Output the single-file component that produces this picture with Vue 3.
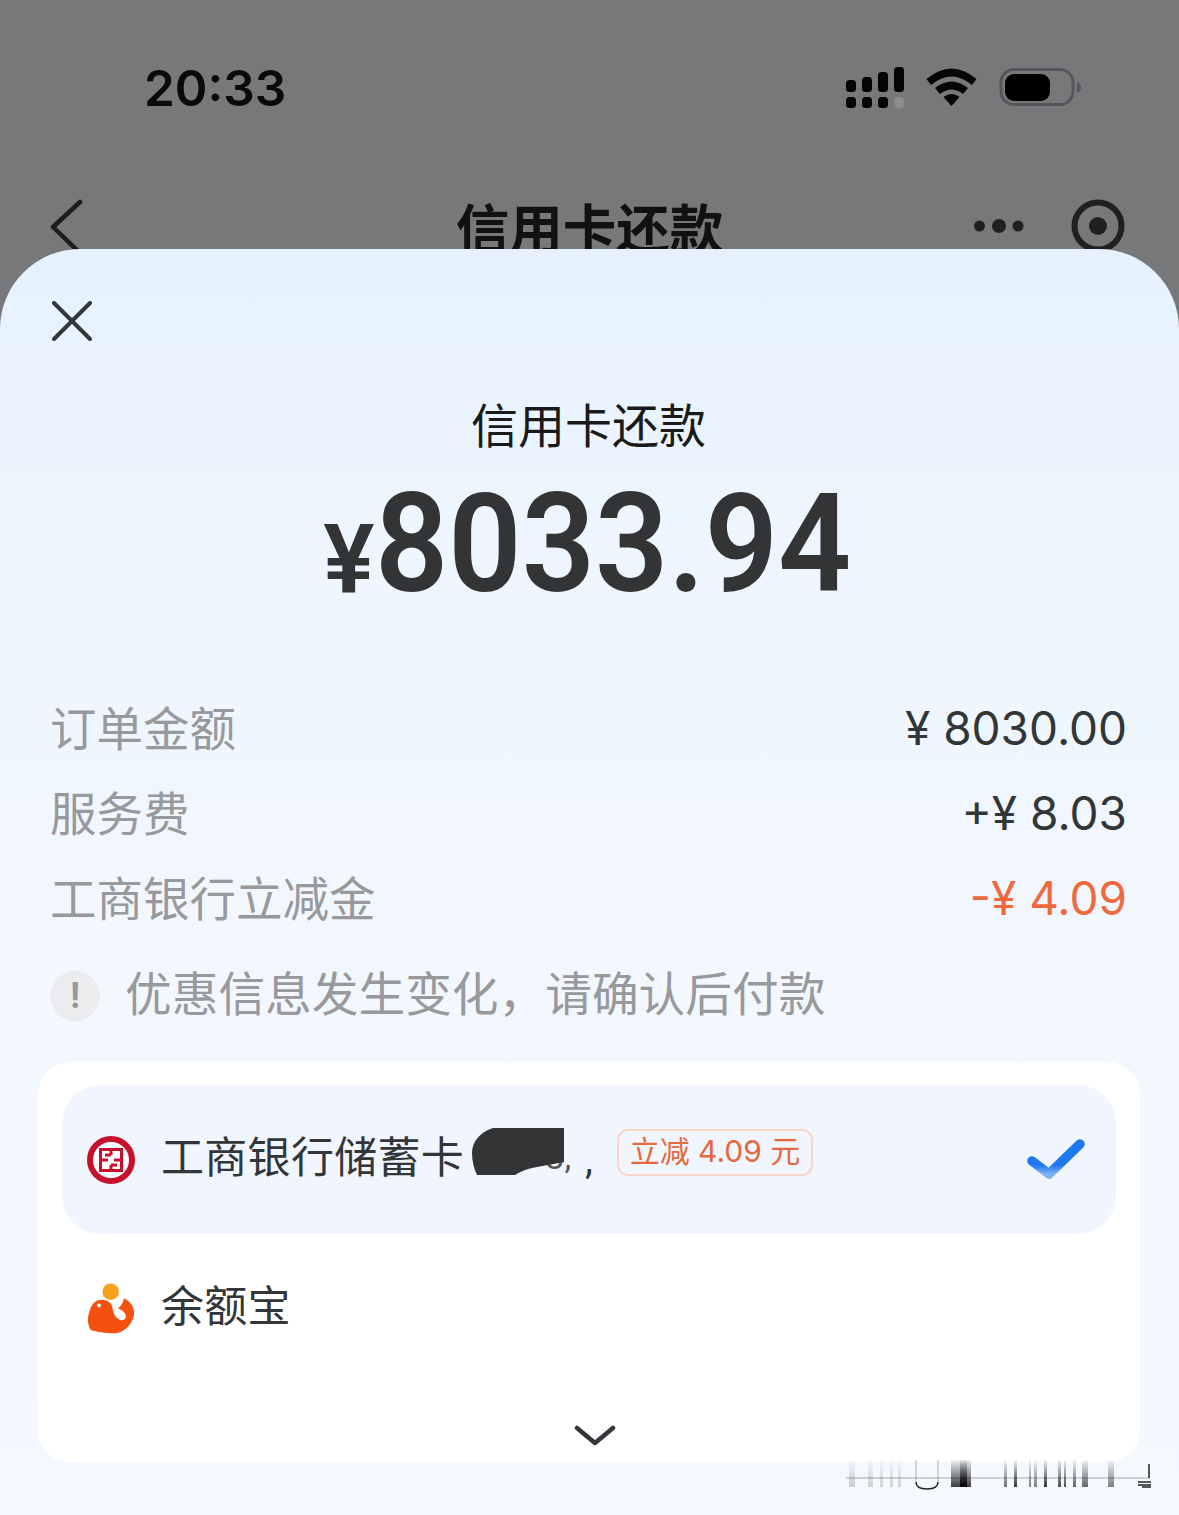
<script setup>
const fees = [
  { label: '订单金额', value: '¥ 8030.00' },
  { label: '服务费', value: '+¥ 8.03' },
  { label: '工商银行立减金', value: '-¥ 4.09', accent: true },
]
const signal = [
  { x: 846, y: 80, h: 12 },
  { x: 862, y: 77, h: 15 },
  { x: 878, y: 72, h: 20 },
  { x: 894, y: 67, h: 25 },
]
const bars = [
  [3, 6, 0.18], [22, 5, 0.16], [34, 3, 0.16], [44, 3, 0.16], [52, 3, 0.16],
  [105, 20, 0.75], [114, 7, 0.9], [158, 3, 0.55], [168, 3, 0.8], [183, 2, 0.5], [188, 3, 0.5],
  [198, 3, 0.8], [212, 3, 0.7], [218, 2, 0.7], [227, 3, 0.6], [236, 6, 0.6], [262, 6, 0.5],
]
</script>

<template>
  <div class="page">
    <header class="top">
      <div class="status">
        <span class="time">20:33</span>
        <svg class="status-icons" viewBox="840 60 245 55" width="245" height="55">
          <g v-for="b in signal" :key="b.x">
            <rect :x="b.x" :y="b.y" width="10" :height="b.h" rx="3.500" fill="#050505" />
            <rect :x="b.x" y="97" width="10" height="11" rx="3.500" :fill="b.x === 894 ? '#8c8c8e' : '#050505'" />
          </g>
          <path d="M926.5 79 Q951.5 58 976.5 79 L972 85 Q951.5 68 931 85 Z" fill="#050505" />
          <path d="M935 88 Q951.5 75 968 88 L963 94 Q951.5 85 940 94 Z" fill="#050505" />
          <path d="M943.5 97 Q951.5 91 959.5 97 L951.5 106 Z" fill="#050505" />
          <rect x="1001" y="69.500" width="72" height="35" rx="13" fill="none" stroke="#55565a" stroke-width="3" />
          <rect x="1005" y="74" width="45" height="27" rx="9" fill="#000" />
          <path d="M1077 82 Q1081 84 1081 87.500 Q1081 91 1077 93 Z" fill="#55565a" />
        </svg>
      </div>
      <nav class="nav">
        <svg width="36" height="62" viewBox="0 0 36 62">
          <path d="M31 7 L4 32 L31 58" fill="none" stroke="#1c1c1e" stroke-width="4.500" stroke-linecap="round" stroke-linejoin="round" />
        </svg>
        <h1 class="nav-title">信用卡还款</h1>
        <svg class="nav-tools" width="152" height="54" viewBox="0 0 152 54">
          <circle cx="6.500" cy="27" r="5.500" fill="#202022" />
          <circle cx="26" cy="27" r="7" fill="#202022" />
          <circle cx="45" cy="27" r="5.500" fill="#202022" />
          <circle cx="125" cy="27" r="23.500" fill="none" stroke="#202022" stroke-width="6" />
          <circle cx="125" cy="27" r="9" fill="#202022" />
        </svg>
      </nav>
    </header>

    <main class="sheet">
      <svg class="close" width="40" height="40" viewBox="0 0 40 40">
        <path d="M2 2 L38 38 M38 2 L2 38" stroke="#33363b" stroke-width="4" stroke-linecap="round" />
      </svg>
      <h2 class="sheet-title">信用卡还款</h2>
      <div class="amount">
        <span class="yen">¥</span>
        <span class="digits">8033.94</span>
      </div>

      <section class="fees">
        <div v-for="f in fees" :key="f.label" class="fee">
          <span class="fee-label">{{ f.label }}</span>
          <span class="fee-value" :class="{ accent: f.accent }">{{ f.value }}</span>
        </div>
      </section>

      <div class="notice">
        <span class="notice-icon">!</span>
        <span class="notice-text">优惠信息发生变化，请确认后付款</span>
      </div>

      <section class="card">
        <div class="method selected">
          <svg class="logo" width="48" height="48" viewBox="0 0 48 48">
            <circle cx="24" cy="24" r="21" fill="#fff" stroke="#c7102c" stroke-width="6" />
            <path d="M12 13.500H36 M12 34.500H36 M13.500 13.500V24H21 M34.500 13.500V24H27 M13.500 24V34.500 M34.500 24V34.500 M24 13.500V19 M24 29V34.500 M18 19H24 M24 29H30" fill="none" stroke="#c7102c" stroke-width="3" />
          </svg>
          <span class="method-name">工商银行储蓄卡</span>
          <span class="card-no">
            <span class="card-tail">3,</span>
            <svg class="blob" width="92" height="47" viewBox="0 0 92 47">
              <path d="M92 0H21C8 4 0 14 0 25C0 33 2 41 5 47H43C48 44 52 42 60 40C70 38 82 36 92 34Z" fill="#333436" />
            </svg>
          </span>
          <span class="comma">,</span>
          <span class="tag">立减 4.09 元</span>
          <svg class="check" width="58" height="42" viewBox="0 0 58 42">
            <defs>
              <linearGradient id="checkfade" x1="0" x2="0" y1="0" y2="1">
                <stop offset="0.700" stop-color="#1f78ef" />
                <stop offset="1" stop-color="#7db2f5" />
              </linearGradient>
            </defs>
            <path d="M5 22 L22 35 L53 5" fill="none" stroke="url(#checkfade)" stroke-width="9.500" stroke-linecap="round" stroke-linejoin="round" />
          </svg>
        </div>
        <div class="method">
          <svg class="logo" width="48" height="54" viewBox="0 0 48 54">
            <circle cx="23.700" cy="8.700" r="8.300" fill="#f6a11c" />
            <path d="M3.700 47C1 42 0 36 2 30C4 22 8 17 13 17C19 16 24 19 25.300 24C26 29 28 35 33 37C37 38 40 35 38.700 32C37 28 33 26 30.300 25.300C34 24 36 20 37 15.300C43 18 48 25 47 31C46 40 38 50 27 50.300C20 50.500 10 49 3.700 47Z" fill="#f4500e" />
            <circle cx="12" cy="22.500" r="2" fill="#fff" />
          </svg>
          <span class="method-name">余额宝</span>
        </div>
        <svg class="more" width="42" height="22" viewBox="0 0 42 22">
          <path d="M3 3 L21 18 L39 3" fill="none" stroke="#33363b" stroke-width="4.500" stroke-linecap="round" stroke-linejoin="round" />
        </svg>
      </section>
    </main>

    <svg class="watermark" width="310" height="40" viewBox="0 0 310 40">
      <defs>
        <linearGradient id="fadebar" x1="0" x2="0" y1="0" y2="1">
          <stop offset="0" stop-color="#000" stop-opacity="0.05" />
          <stop offset="1" stop-color="#000" stop-opacity="1" />
        </linearGradient>
      </defs>
      <rect v-for="b in bars" :key="b[0]" :x="b[0]" y="4" :width="b[1]" height="27" fill="url(#fadebar)" :opacity="b[2]" />
      <path d="M0 22H304" stroke="#000" stroke-opacity="0.16" stroke-width="2" />
      <path d="M70 26Q70 33 81 33Q92 33 92 26" fill="none" stroke="#222" stroke-width="1.500" />
      <path d="M70 4V26M92 4V26" stroke="#000" stroke-opacity="0.25" stroke-width="1.200" />
      <path d="M303 8V22M292 26H305M292 29H305M296 31H305" stroke="#222" stroke-width="1.500" />
    </svg>
  </div>
</template>

<style>
html, body { margin: 0; background: #77787a; }
</style>

<style scoped>
.page {
  position: relative;
  width: 1179px;
  height: 1515px;
  overflow: hidden;
  background: #77787a;
  font-family: "Noto Sans CJK SC", "Noto Sans", sans-serif;
}
.top { height: 249px; overflow: hidden; }
.status { height: 175px; position: relative; }
.time {
  position: absolute;
  left: 144px;
  top: 58px;
  font: 600 49.500px/60px Inter, sans-serif;
  color: #0a0a0a;
}
.status-icons { position: absolute; left: 840px; top: 60px; }
.nav {
  height: 102px;
  position: relative;
  display: flex;
  align-items: center;
  justify-content: space-between;
  padding: 0 52px 0 49px;
}
.nav-title {
  margin: 0;
  position: absolute;
  left: 0;
  right: 0;
  text-align: center;
  font-size: 53.500px;
  line-height: 102px;
  font-weight: 700;
  color: #111;
}
.nav-tools { margin-right: 2px; }
.sheet {
  height: 1266px;
  padding-top: 52px;
  box-sizing: border-box;
  border-radius: 80px 80px 0 0;
  background: linear-gradient(180deg, #e5f2fe 0%, #edf5fe 20%, #f2f7fe 50%, #f5f8fe 100%);
  display: flex;
  flex-direction: column;
}
.close { margin-left: 52px; flex: none; }
.sheet-title {
  margin: 52px 0 4px;
  padding-right: 2px;
  text-align: center;
  font-size: 47px;
  line-height: 60px;
  font-weight: 400;
  color: #1a1a1a;
}
.amount {
  height: 170px;
  padding-right: 3px;
  display: flex;
  justify-content: center;
  align-items: baseline;
  color: #333436;
  font-family: Roboto, sans-serif;
  font-weight: 600;
  line-height: 174px;
}
.yen { font-size: 96px; margin-right: 1px; transform: translateY(2px); }
.digits {
  display: inline-block;
  font-size: 138px;
  transform: scaleX(0.93);
  transform-origin: left center;
  margin-right: -35px;
}
.fees { margin-top: 60px; padding: 0 52px 0 50px; }
.fee {
  height: 85px;
  display: flex;
  justify-content: space-between;
  align-items: center;
  font-size: 46.500px;
}
.fee-label { color: #97999c; margin-bottom: 8px; }
.fee-value {
  font-family: Inter, sans-serif;
  font-size: 46px;
  color: #333639;
  margin-bottom: 3px;
}
.fee-value.accent { color: #ee6a3e; }
.notice {
  margin: 29px 0 0 50px;
  height: 50px;
  display: flex;
  align-items: center;
  gap: 25px;
}
.notice-icon {
  width: 50px;
  height: 50px;
  border-radius: 50%;
  background: #ececee;
  color: #98999c;
  font: 700 36px/50px Roboto, sans-serif;
  text-align: center;
}
.notice-text { font-size: 46.700px; color: #97999c; white-space: nowrap; margin-bottom: 12px; }
.card {
  margin: 41px 39px 0 38px;
  height: 400px;
  box-sizing: border-box;
  padding: 23px 24px 0;
  border-radius: 32px;
  background: #fff;
  display: flex;
  flex-direction: column;
  position: relative;
}
.method {
  height: 149px;
  padding: 0 32px 0 25px;
  display: flex;
  align-items: center;
  border-radius: 38px;
  flex: none;
}
.method.selected { background: #f1f6fe; }
.logo { flex: none; margin-right: 26px; }
.method-name {
  font-size: 43px;
  letter-spacing: 0.300px;
  color: #333639;
  white-space: nowrap;
  margin-bottom: 12px;
}
.card-no {
  position: relative;
  width: 110px;
  height: 50px;
  margin-left: 7px;
  flex: none;
  font: 34px/56px Roboto, sans-serif;
  color: #55575a;
}
.card-tail { position: absolute; right: 10px; top: -6px; }
.blob { position: absolute; left: 1px; top: -7px; }
.comma {
  font: 40px/50px Roboto, sans-serif;
  color: #333639;
  margin-left: 4px;
}
.tag {
  margin: -14px 0 0 24px;
  box-sizing: border-box;
  height: 47px;
  width: 196px;
  border: 2px solid #f8d5c9;
  border-radius: 11px;
  font-family: Inter, "Noto Sans CJK SC", sans-serif;
  font-size: 30px;
  line-height: 41px;
  text-align: center;
  color: #e5683f;
  white-space: nowrap;
}
.check { margin-left: auto; margin-right: -1px; }
.method:not(.selected) .logo { margin-top: 3px; }
.more { position: absolute; left: 536px; bottom: 15px; }
.watermark { position: absolute; left: 846px; top: 1456px; }
</style>
